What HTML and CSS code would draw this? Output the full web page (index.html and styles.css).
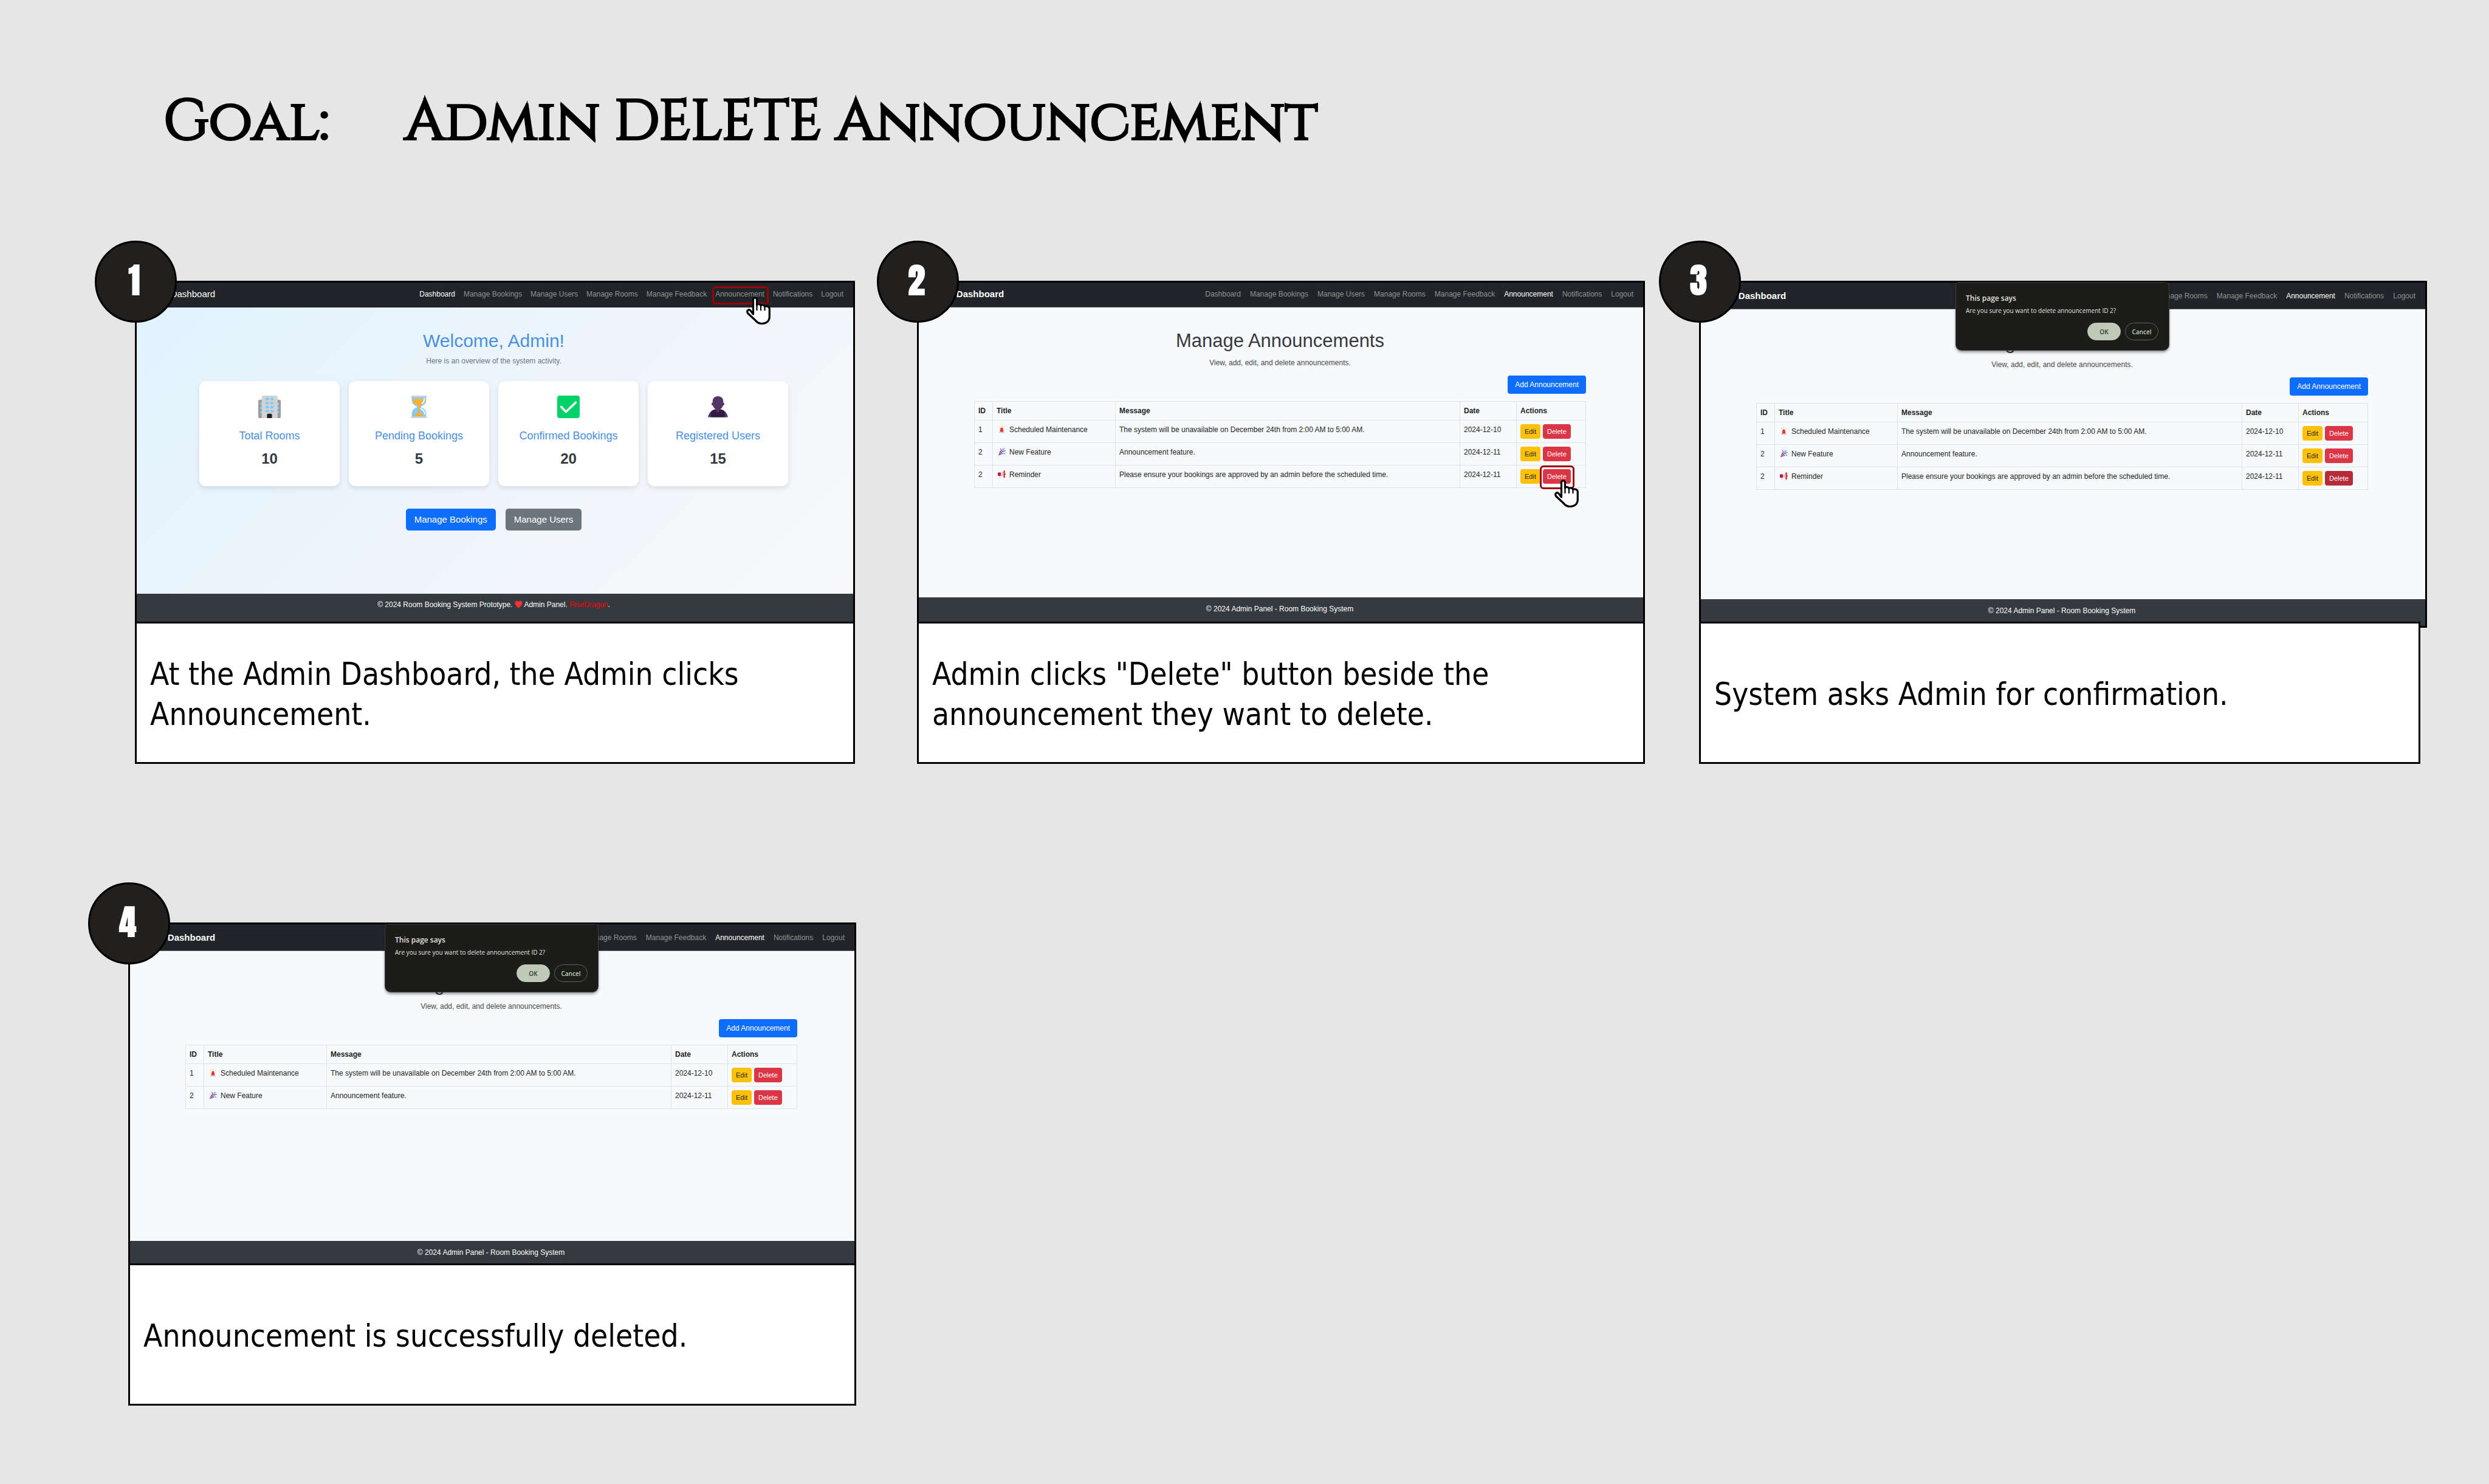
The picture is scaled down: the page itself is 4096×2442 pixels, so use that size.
FILE: index.html
```html
<!DOCTYPE html>
<html lang="en">
<head>
<meta charset="utf-8">
<title>Goal: Admin delete announcement</title>
<link rel="stylesheet" href="styles.css">
</head>
<body>
<svg class="sprite" aria-hidden="true">
  <symbol id="hand" viewBox="0 0 40 46">
    <path d="M11.5 29V5a3 3 0 0 1 6 0v9c1-2.400 6-2 6.500 1 1-2 6-1.500 6.500 1.500 2.500-1.500 7.500-.500 7.800 3.500v13c0 7-4.800 11.500-12.300 11.500-5.500 0-8.500-2-11-5.500L2.600 27.500c-2.600-4.500 1.800-7.500 4.400-4.500z" fill="#fff" stroke="#000" stroke-width="3.200" stroke-linejoin="round"/>
    <path d="M17.500 13v10M24 15v8M30.500 16.500v6.500" fill="none" stroke="#000" stroke-width="2.200"/>
  </symbol>
  <symbol id="building" viewBox="0 0 36 36">
    <rect y="6.500" width="36" height="29.500" rx="2.500" fill="#9b9b9b"/>
    <path d="M5.500 3a3 3 0 0 1 3-3h19.500a3 3 0 0 1 3 3v33h-25.500z" fill="#d3d3d3"/>
    <g fill="#83cbff">
      <rect x="11.500" y="3.500" width="5.500" height="4" rx="1"/><rect x="19.200" y="3.500" width="5.500" height="4" rx="1"/>
      <rect x="11.500" y="10" width="5.500" height="4" rx="1"/><rect x="19.200" y="10" width="5.500" height="4" rx="1"/>
      <rect x="11.500" y="16.500" width="5.500" height="4" rx="1"/><rect x="19.200" y="16.500" width="5.500" height="4" rx="1"/>
      <rect x="11.500" y="23" width="5.500" height="4" rx="1"/><rect x="19.200" y="23" width="5.500" height="4" rx="1"/>
      <path d="M5.500 11.500h-1a1.500 1.500 0 0 0-1.500 2 1.500 1.500 0 0 0 1.500 2h1zM5.500 18h-1a1.500 1.500 0 0 0-1.500 2 1.500 1.500 0 0 0 1.500 2h1zM5.500 24.500h-1a1.500 1.500 0 0 0-1.500 2 1.500 1.500 0 0 0 1.500 2h1zM31 11.500h1a1.500 1.500 0 0 1 1.500 2 1.500 1.500 0 0 1-1.500 2h-1zM31 18h1a1.500 1.500 0 0 1 1.500 2 1.500 1.500 0 0 1-1.500 2h-1zM31 24.500h1a1.500 1.500 0 0 1 1.500 2 1.500 1.500 0 0 1-1.500 2h-1z"/>
    </g>
    <path d="M14 36v-5a2 2 0 0 1 2-2h4a2 2 0 0 1 2 2v5z" fill="#212121"/>
  </symbol>
  <symbol id="hourglass" viewBox="0 0 36 36">
    <path d="M6.500 2h23v5c0 6-3.500 8-8 10v2c4.500 2 8 4 8 10v5h-23v-5c0-6 3.500-8 8-10v-2c-4.500-2-8-4-8-10z" fill="#83cbff"/>
    <path d="M8 5h19.500c0 7-3 8.500-8 11v12.500c3 .500 6 2.500 6.500 4.500h-16c.500-2 3.500-4 6.500-4.500v-12.500c-5.500-2.500-8.500-4-8.500-11z" fill="#ffb02e"/>
    <path d="M26.500 4.500c0 4-1 6-3.500 8M20.500 20.500c4 2 6.500 4.500 7 9" fill="none" stroke="#fff" stroke-width="1.800" stroke-linecap="round"/>
    <rect x="5" y="0" width="26" height="2.500" rx="1.200" fill="#d3d3d3"/>
    <rect x="5" y="33.500" width="26" height="2.500" rx="1.200" fill="#d3d3d3"/>
  </symbol>
  <symbol id="tick" viewBox="0 0 36 36">
    <rect width="36" height="36" rx="4" fill="#00d26a"/>
    <path d="M6.500 18l7.500 8L29.500 11" fill="none" stroke="#f4f4f4" stroke-width="3.600" stroke-linecap="round" stroke-linejoin="round"/>
  </symbol>
  <symbol id="person" viewBox="0 0 36 36">
    <path d="M2 34.500c1.500-7 6-12 12-12.500h8c6 .500 10.500 5.500 12 12.500z" fill="#533566"/>
    <path d="M7 34.500v-7c2-3.500 5-5.500 8-5.500h6c3 0 6 2 8 5.500v7z" fill="#321b41"/>
    <path d="M18 1c-5.500 0-8.500 3.500-8.500 8v2.500c-2.500 0-2.500 4 .500 4.500.700 3 2.500 4.500 5.200 6.500 0 6 5.600 6 5.600 0 2.700-2 4.500-3.500 5.200-6.500 3-.500 3-4.500.500-4.500V9c0-4.500-3-8-8.500-8z" fill="#533566"/>
  </symbol>
  <symbol id="siren" viewBox="0 0 13 13">
    <path d="M6.500 0v2.500M2.500 1l1.200 2.200M10.500 1L9.300 3.200" stroke="#fcd53f" stroke-width="1"/>
    <path d="M3.500 11l.800-5.500a2.200 2 0 0 1 4.400 0l.800 5.500z" fill="#f8312f"/>
    <rect x="2" y="10.500" width="9" height="2" rx=".600" fill="#d3d3d3"/>
  </symbol>
  <symbol id="popper" viewBox="0 0 13 13">
    <path d="M1 12.500L3.500 5l5 5z" fill="#ffb02e"/>
    <path d="M2.500 8l3 3.200M1.600 10.500l1.500 1.500M3.500 5.500l4.500 4.400" stroke="#5235ef" stroke-width="1.200"/>
    <path d="M5 6c1-1 .500-3.500-.500-5M8 7c1-2.500 3-1.500 4.500-2.500" fill="none" stroke="#f70a8d" stroke-width="1.200"/>
    <path d="M6.500 7c2-1.500 1.500-3 2.500-6M9 8.500c1 .500 2 0 3 1.500M10.500 2.500l1-1" fill="none" stroke="#00a6ed" stroke-width="1.300"/>
  </symbol>
  <symbol id="megaphone" viewBox="0 0 13 13">
    <path d="M5 4l5-3v10.500L5 8.700z" fill="#d3d3d3"/>
    <path d="M2 8h2.500v4.500h-2z" fill="#d3d3d3"/>
    <rect x="0" y="3.500" width="5" height="5.500" rx=".700" fill="#ca0b4a"/>
    <rect x="9.500" y="0" width="2.300" height="12.500" rx="1.100" fill="#f8312f"/>
    <path d="M11.600 4.500a2 2 0 0 1 0 3.500z" fill="#321b41"/>
  </symbol>
  <symbol id="heart" viewBox="0 0 13 13">
    <path d="M6.500 12.500C2 9 .500 7 .500 4.200.500.500 5-.500 6.500 2.500 8-.500 12.500.500 12.500 4.200 12.500 7 11 9 6.500 12.500z" fill="#f8312f"/>
  </symbol>
</svg>

<h1 class="goal">
  <span>Goal:</span>
  <span>Admin DELETE Announcement</span>
</h1>

<main class="steps">
  <section class="step step-inset">
    <span class="badge">1</span>
    <div class="screen screen-home">
      <nav class="navbar">
        <a class="brand brand-light" href="#">Admin Dashboard</a>
        <div class="links links-tight">
          <a class="current" href="#">Dashboard</a>
          <a href="#">Manage Bookings</a>
          <a href="#">Manage Users</a>
          <a href="#">Manage Rooms</a>
          <a href="#">Manage Feedback</a>
          <a class="pointed" href="#">Announcement<span class="marker marker-link"></span><svg class="cursor cursor-link" aria-hidden="true"><use href="#hand"/></svg></a>
          <a href="#">Notifications</a>
          <a href="#">Logout</a>
        </div>
      </nav>
      <div class="home">
        <h2 class="welcome">Welcome, Admin!</h2>
        <p class="lead lead-muted">Here is an overview of the system activity.</p>
        <div class="cards">
          <article class="card"><svg class="card-icon" aria-hidden="true"><use href="#building"/></svg><h3>Total Rooms</h3><p>10</p></article>
          <article class="card"><svg class="card-icon" aria-hidden="true"><use href="#hourglass"/></svg><h3>Pending Bookings</h3><p>5</p></article>
          <article class="card"><svg class="card-icon" aria-hidden="true"><use href="#tick"/></svg><h3>Confirmed Bookings</h3><p>20</p></article>
          <article class="card"><svg class="card-icon" aria-hidden="true"><use href="#person"/></svg><h3>Registered Users</h3><p>15</p></article>
        </div>
        <div class="home-actions">
          <button class="btn btn-large btn-primary" type="button">Manage Bookings</button>
          <button class="btn btn-large btn-secondary" type="button">Manage Users</button>
        </div>
      </div>
      <footer class="site-footer">© 2024 Room Booking System Prototype. <svg class="heart" aria-hidden="true"><use href="#heart"/></svg> Admin Panel. <a href="#">RiseDragon</a>.</footer>
    </div>
    <p class="caption">At the Admin Dashboard, the Admin clicks Announcement.</p>
  </section>

  <section class="step">
    <span class="badge">2</span>
    <div class="screen screen-tall">
      <nav class="navbar navbar-ruled">
        <a class="brand" href="#">Admin Dashboard</a>
        <div class="links">
          <a href="#">Dashboard</a>
          <a href="#">Manage Bookings</a>
          <a href="#">Manage Users</a>
          <a href="#">Manage Rooms</a>
          <a href="#">Manage Feedback</a>
          <a class="current" href="#">Announcement</a>
          <a href="#">Notifications</a>
          <a href="#">Logout</a>
        </div>
      </nav>
      <div class="manage">
        <h2 class="page-title">Manage Announcements</h2>
        <p class="lead">View, add, edit, and delete announcements.</p>
        <button class="btn btn-add btn-primary" type="button">Add Announcement</button>
        <table class="list">
          <colgroup><col class="c-id"><col class="c-title"><col><col class="c-date"><col class="c-actions"></colgroup>
          <thead><tr><th>ID</th><th>Title</th><th>Message</th><th>Date</th><th>Actions</th></tr></thead>
          <tbody>
            <tr><td>1</td><td><svg class="emoji" aria-hidden="true"><use href="#siren"/></svg>Scheduled Maintenance</td><td>The system will be unavailable on December 24th from 2:00 AM to 5:00 AM.</td><td>2024-12-10</td><td><div class="row-actions"><button class="btn btn-small btn-warning" type="button">Edit</button><button class="btn btn-small btn-danger" type="button">Delete</button></div></td></tr>
            <tr><td>2</td><td><svg class="emoji" aria-hidden="true"><use href="#popper"/></svg>New Feature</td><td>Announcement feature.</td><td>2024-12-11</td><td><div class="row-actions"><button class="btn btn-small btn-warning" type="button">Edit</button><button class="btn btn-small btn-danger" type="button">Delete</button></div></td></tr>
            <tr><td>2</td><td><svg class="emoji" aria-hidden="true"><use href="#megaphone"/></svg>Reminder</td><td>Please ensure your bookings are approved by an admin before the scheduled time.</td><td>2024-12-11</td><td><div class="row-actions"><button class="btn btn-small btn-warning" type="button">Edit</button><span class="pointed"><button class="btn btn-small btn-danger" type="button">Delete</button><span class="marker marker-button"></span><svg class="cursor cursor-button" aria-hidden="true"><use href="#hand"/></svg></span></div></td></tr>
          </tbody>
        </table>
      </div>
      <footer class="site-footer">© 2024 Admin Panel - Room Booking System</footer>
    </div>
    <p class="caption">Admin clicks "Delete" button beside the announcement they want to delete.</p>
  </section>

  <section class="step">
    <span class="badge">3</span>
    <div class="screen screen-tall">
      <nav class="navbar navbar-ruled navbar-high">
        <a class="brand" href="#">Admin Dashboard</a>
        <div class="links">
          <a href="#">Manage Rooms</a>
          <a href="#">Manage Feedback</a>
          <a class="current" href="#">Announcement</a>
          <a href="#">Notifications</a>
          <a href="#">Logout</a>
        </div>
      </nav>
      <div class="manage">
        <h2 class="page-title">Manage Announcements</h2>
        <p class="lead">View, add, edit, and delete announcements.</p>
        <button class="btn btn-add btn-primary" type="button">Add Announcement</button>
        <table class="list">
          <colgroup><col class="c-id"><col class="c-title"><col><col class="c-date"><col class="c-actions"></colgroup>
          <thead><tr><th>ID</th><th>Title</th><th>Message</th><th>Date</th><th>Actions</th></tr></thead>
          <tbody>
            <tr><td>1</td><td><svg class="emoji" aria-hidden="true"><use href="#siren"/></svg>Scheduled Maintenance</td><td>The system will be unavailable on December 24th from 2:00 AM to 5:00 AM.</td><td>2024-12-10</td><td><div class="row-actions"><button class="btn btn-small btn-warning" type="button">Edit</button><button class="btn btn-small btn-danger" type="button">Delete</button></div></td></tr>
            <tr><td>2</td><td><svg class="emoji" aria-hidden="true"><use href="#popper"/></svg>New Feature</td><td>Announcement feature.</td><td>2024-12-11</td><td><div class="row-actions"><button class="btn btn-small btn-warning" type="button">Edit</button><button class="btn btn-small btn-danger" type="button">Delete</button></div></td></tr>
            <tr><td>2</td><td><svg class="emoji" aria-hidden="true"><use href="#megaphone"/></svg>Reminder</td><td>Please ensure your bookings are approved by an admin before the scheduled time.</td><td>2024-12-11</td><td><div class="row-actions"><button class="btn btn-small btn-warning" type="button">Edit</button><button class="btn btn-small btn-danger btn-pressed" type="button">Delete</button></div></td></tr>
          </tbody>
        </table>
      </div>
      <footer class="site-footer">© 2024 Admin Panel - Room Booking System</footer>
      <div class="dialog" role="dialog" aria-label="This page says">
        <h3>This page says</h3>
        <p>Are you sure you want to delete announcement ID 2?</p>
        <div class="dialog-actions"><button class="pill pill-ok" type="button">OK</button><button class="pill" type="button">Cancel</button></div>
      </div>
    </div>
    <p class="caption caption-narrow">System asks Admin for confirmation.</p>
  </section>

  <section class="step step-start">
    <span class="badge">4</span>
    <div class="screen screen-tall">
      <nav class="navbar navbar-ruled navbar-high">
        <a class="brand" href="#">Admin Dashboard</a>
        <div class="links">
          <a href="#">Manage Rooms</a>
          <a href="#">Manage Feedback</a>
          <a class="current" href="#">Announcement</a>
          <a href="#">Notifications</a>
          <a href="#">Logout</a>
        </div>
      </nav>
      <div class="manage">
        <h2 class="page-title">Manage Announcements</h2>
        <p class="lead">View, add, edit, and delete announcements.</p>
        <button class="btn btn-add btn-primary" type="button">Add Announcement</button>
        <table class="list">
          <colgroup><col class="c-id"><col class="c-title"><col><col class="c-date"><col class="c-actions"></colgroup>
          <thead><tr><th>ID</th><th>Title</th><th>Message</th><th>Date</th><th>Actions</th></tr></thead>
          <tbody>
            <tr><td>1</td><td><svg class="emoji" aria-hidden="true"><use href="#siren"/></svg>Scheduled Maintenance</td><td>The system will be unavailable on December 24th from 2:00 AM to 5:00 AM.</td><td>2024-12-10</td><td><div class="row-actions"><button class="btn btn-small btn-warning" type="button">Edit</button><button class="btn btn-small btn-danger" type="button">Delete</button></div></td></tr>
            <tr><td>2</td><td><svg class="emoji" aria-hidden="true"><use href="#popper"/></svg>New Feature</td><td>Announcement feature.</td><td>2024-12-11</td><td><div class="row-actions"><button class="btn btn-small btn-warning" type="button">Edit</button><button class="btn btn-small btn-danger" type="button">Delete</button></div></td></tr>
          </tbody>
        </table>
      </div>
      <footer class="site-footer">© 2024 Admin Panel - Room Booking System</footer>
      <div class="dialog" role="dialog" aria-label="This page says">
        <h3>This page says</h3>
        <p>Are you sure you want to delete announcement ID 2?</p>
        <div class="dialog-actions"><button class="pill pill-ok" type="button">OK</button><button class="pill" type="button">Cancel</button></div>
      </div>
    </div>
    <p class="caption">Announcement is successfully deleted.</p>
  </section>
</main>
</body>
</html>
```
FILE: styles.css
```css
* { box-sizing: border-box; }

body {
  margin: 0;
  min-height: 100vh;
  background: #e6e6e6;
  font-family: "Liberation Sans", Arial, sans-serif;
  font-size: 12px;
  line-height: 18px;
  color: #212529;
}

h1, h2, h3, p { margin: 0; font-weight: 400; }
a { color: inherit; text-decoration: none; }
button { font: inherit; }
.sprite { display: none; }

/* Title */
.goal {
  display: flex;
  gap: 124px;
  padding: 141px 102px 0 269px;
  font-family: Cinzel, "Liberation Serif", "Times New Roman", serif;
  font-size: 93px;
  line-height: 120px;
  color: #000;
  -webkit-text-stroke: 4px #000;
}

/* Storyboard */
.steps {
  display: grid;
  grid-template-columns: 1209fr 1198fr 1198fr;
  gap: 261px 89px;
  padding: 201px 102px 128px 211px;
}
.step { position: relative; }
.step-inset { margin: 0 13px 0 11px; }
.step-start { margin-right: 11px; }

.badge {
  position: absolute;
  z-index: 3;
  left: -66px;
  top: -66px;
  display: flex;
  align-items: center;
  justify-content: center;
  width: 135px;
  height: 135px;
  padding: 0 5px 5px 0;
  border: 3px solid #000;
  border-radius: 50%;
  background: #22201f;
  color: #fff;
  font-family: Anton, Impact, "Liberation Sans Narrow", "DejaVu Sans Condensed", sans-serif;
  font-size: 56px;
  font-weight: 700;
  line-height: 68px;
}

.caption {
  position: relative;
  z-index: 2;
  display: flex;
  align-items: center;
  min-height: 234px;
  margin-top: -10px;
  padding: 6px 22px 0;
  border: 3px solid #000;
  background: #fff;
  color: #000;
  font-family: Tahoma, "DejaVu Sans Condensed", "DejaVu Sans", sans-serif;
  font-size: 51px;
  line-height: 66px;
}
.caption-narrow { margin-right: 11px; }
.screen-home + .caption { margin-top: -3px; }

/* Application screens */
.screen {
  position: relative;
  display: flex;
  flex-direction: column;
  min-height: 571px;
  border: 3px solid #000;
  background: #f8f9fb;
}
.screen-home {
  min-height: 564px;
  background: linear-gradient(135deg, #e1f2fd, #e8f4fd 30%, #f0f5fd 55%, #f3f7fa 75%, #f9f9fb);
}

.navbar {
  display: flex;
  align-items: center;
  justify-content: space-between;
  height: 41px;
  padding: 0 16px 3px 11px;
  background: #212529;
  color: #909294;
}
.screen-home .navbar { padding-left: 9px; }
.navbar-ruled { border-bottom: 1px solid #5c6066; }
.navbar-high { height: 44px; padding-top: 3px; }
.brand { font-size: 15px; font-weight: 700; color: #fff; }
.brand-light { font-weight: 400; }
.links { display: flex; gap: 15px; white-space: nowrap; }
.links-tight { gap: 14px; }
.links .current { color: #fff; }

.site-footer {
  min-height: 47px;
  padding: 10px 4px 0 0;
  background: #343a40;
  color: #fff;
  text-align: center;
}
.navbar-high ~ .site-footer { min-height: 44px; }
.screen-home .site-footer { min-height: 46px; padding-top: 9px; }
.site-footer a { color: #f00; }
.heart { width: 13px; height: 13px; vertical-align: -2px; }

.lead { text-align: center; color: #45494e; }
.lead-muted { color: #6c757d; }

/* Dashboard */
.home { flex: 1; padding: 37px 107px 0 103px; }
.welcome {
  margin-bottom: 6px;
  font-size: 30px;
  line-height: 36px;
  text-align: center;
  color: #4a90e2;
}
.cards {
  display: grid;
  grid-template-columns: repeat(4, 1fr);
  gap: 15px;
  margin-top: 24px;
}
.card {
  display: flex;
  flex-direction: column;
  align-items: center;
  padding: 24px 12px 31px;
  border-radius: 11px;
  background: #fff;
  box-shadow: 0 4px 10px rgba(0, 0, 0, .1);
}
.card-icon { width: 37px; height: 37px; }
.card h3 { margin: 18px 0 13px; font-size: 18px; line-height: 22px; color: #4a90e2; }
.card p { font-size: 24px; font-weight: 700; line-height: 28px; color: #343a40; }
.home-actions { display: flex; justify-content: center; gap: 16px; margin-top: 37px; }

/* Buttons */
.btn {
  padding: 0;
  border: 0;
  border-radius: 4px;
  color: #fff;
  text-align: center;
}
.btn-large { padding: 9px 14px; border-radius: 5px; font-size: 15px; line-height: 18px; }
.btn-add { display: block; margin: 12px 0 12px auto; padding: 6px 12px; }
.btn-small { padding: 3px 7px; font-size: 11px; }
.btn-primary { background: #0d6efd; }
.btn-secondary { background: #6c757d; }
.btn-warning { background: #ffc107; color: #212529; }
.btn-danger { background: #dc3545; }
.btn-pressed { background: #b52b39; }

/* Announcements */
.manage { flex: 1; padding: 36px 94px 0 91px; }
.page-title {
  margin-bottom: 8px;
  font-size: 31px;
  line-height: 38px;
  text-align: center;
  color: #343a40;
}
.list { width: 100%; table-layout: fixed; border-collapse: collapse; text-align: left; }
.list th, .list td { padding: 6px; border: 1px solid #dee2e6; vertical-align: top; white-space: nowrap; }
.c-id { width: 30px; }
.c-title { width: 202px; }
.c-date { width: 93px; }
.c-actions { width: 114px; }
.emoji { width: 13px; height: 13px; margin: 0 6px 0 2px; vertical-align: -2px; }
.row-actions { display: flex; gap: 4px; }

/* Click highlights */
.pointed { position: relative; display: inline-flex; }
.marker { position: absolute; border: 3px solid #9b0006; border-radius: 6px; }
.marker-link { inset: -4px -7px -8px -5px; }
.marker-button { inset: -6px -6px -9px -5px; }
.cursor { position: absolute; z-index: 2; width: 40px; height: 46px; }
.cursor-link { top: 13px; right: -10px; }
.cursor-button { top: 17px; right: -13px; }

/* Confirmation dialog */
.dialog {
  position: absolute;
  top: 0;
  left: 420px;
  width: 350px;
  height: 111px;
  padding: 18px 17px 16px 16px;
  border-radius: 5px 5px 9px 9px;
  background: #1c1c1a;
  box-shadow: 0 0 0 1px #3c3d3f, 0 3px 5px rgba(0, 0, 0, .5);
  color: #e4e4df;
  font-family: "Segoe UI", "Open Sans", sans-serif;
  font-size: 10px;
}
.dialog h3, .dialog p { line-height: 16px; }
.dialog h3 { font-size: 12px; font-weight: 600; }
.dialog p { margin: 4px 0 12px; }
.dialog-actions { display: flex; justify-content: flex-end; gap: 7px; }
.pill {
  width: 55px;
  height: 29px;
  padding: 0;
  border: 1px solid #5f625d;
  border-radius: 15px;
  background: transparent;
  color: #c3d3bb;
  font-weight: 600;
}
.pill-ok { border-color: #bfc9b8; background: #bfc9b8; color: #31382f; }
```
